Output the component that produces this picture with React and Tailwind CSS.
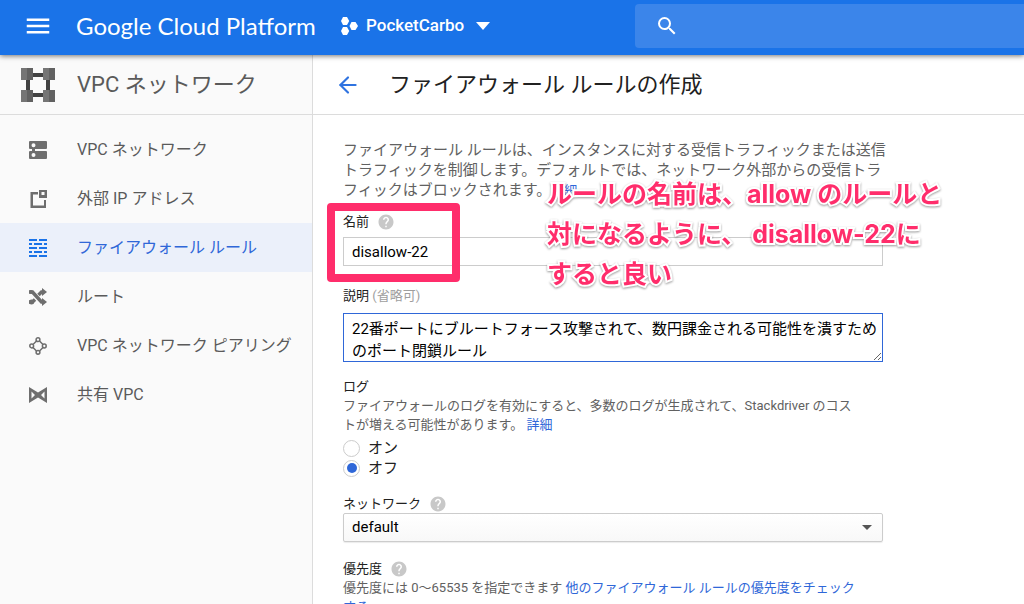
import React, { useState } from 'react';
import { ArrowLeft } from 'lucide-react';
import { MdHelp, MdSearch, MdMenu } from 'react-icons/md';

const NetworkIcon = () => (
  <svg viewBox="0 0 18 18" className="size-[18px]" fill="currentColor">
    <path fillRule="evenodd" d="M1 0h16a1 1 0 0 1 1 1v6a1 1 0 0 1-1 1H6v2h11a1 1 0 0 1 1 1v6a1 1 0 0 1-1 1H1a1 1 0 0 1-1-1v-6a1 1 0 0 1 1-1h2V8H1a1 1 0 0 1-1-1V1a1 1 0 0 1 1-1zM4.500 2.200a2 2 0 1 0 0 4 2 2 0 0 0 0-4zM4.500 12a2 2 0 1 0 0 4 2 2 0 0 0 0-4z" />
  </svg>
);

const AddressIcon = () => (
  <svg viewBox="0 0 18 18" className="size-[18px]" fill="currentColor">
    <path d="M1.500 2H9v2.500H4v11h11V10h2v8H1.500z" />
    <path fillRule="evenodd" d="M10 0h8v8h-8zM12.500 2v3h3V2z" />
  </svg>
);

const FirewallIcon = () => (
  <svg viewBox="0 0 18 18" className="size-[18px]" fill="currentColor">
    <path d="M0 0h8v2H0zM10 0h8v2h-8zM0 4h3v2H0zM5 4h8v2H5zM15 4h3v2h-3zM0 8h8v2H0zM10 8h8v2h-8zM0 12h3v2H0zM5 12h8v2H5zM15 12h3v2h-3zM0 16h8v2H0zM10 16h8v2h-8z" />
  </svg>
);

const RouteIcon = () => (
  <svg viewBox="0 0 18 18" className="size-[18px]" fill="none" stroke="currentColor" strokeWidth="3.500">
    <path d="M0 4h3.500l9 10H14M0 14h3.500l2.500-2.500M9.500 7l3-3H14" />
    <path d="M13 0l5 4-5 4zM13 10l5 4-5 4z" fill="currentColor" stroke="none" />
    <circle cx="2" cy="4" r="2" fill="currentColor" stroke="none" />
    <circle cx="2.500" cy="14" r="2.500" fill="currentColor" stroke="none" />
  </svg>
);

const PeeringIcon = () => (
  <svg viewBox="0 0 18 18" className="size-[18px]" fill="none" stroke="currentColor" strokeWidth="1.500">
    <path d="M7.500 4L4 7.500M10.500 4L14 7.500M4 10.500L7.500 14M14 10.500L10.500 14" />
    <circle cx="9" cy="2.700" r="1.900" />
    <circle cx="2.700" cy="9" r="1.900" />
    <circle cx="15.300" cy="9" r="1.900" />
    <circle cx="9" cy="15.300" r="1.900" />
  </svg>
);

const SharedIcon = () => (
  <svg viewBox="0 0 18 18" className="size-[18px]" fill="currentColor">
    <path fillRule="evenodd" d="M0 1l9 5.500L18 1v16l-9-5.500L0 17zM2.500 5.500v7L6 9zM15.500 5.500v7L12 9z" />
  </svg>
);

const VpcLogo = () => (
  <svg viewBox="0 0 34 34" className="size-[34px]">
    <path fill="#424242" d="M12 5h10v4H12zM12 25h10v4H12zM5 12h4v10H5zM25 12h4v10h-4z" />
    <path fill="#757575" d="M0 0h12v12H0zM22 0h12v12H22zM0 22h12v12H0zM22 22h12v12H22z" />
    <path fill="#616161" d="M6 0h6v12H6zM28 0h6v12h-6zM6 22h6v12H6zM28 22h6v12h-6z" />
  </svg>
);

const ProjectIcon = () => (
  <svg viewBox="0 0 17 18" className="h-[18px] w-[17px]" fill="currentColor">
    <path d="M2 0h4l2.200 4L6 8H2L0 4zM2 10h4l2.200 4L6 18H2L0 14zM10.500 5h4L17 9l-2.500 4h-4L8.500 9z" />
  </svg>
);

const navItems = [
  { label: 'VPC ネットワーク', icon: NetworkIcon },
  { label: '外部 IP アドレス', icon: AddressIcon },
  { label: 'ファイアウォール ルール', icon: FirewallIcon, active: true },
  { label: 'ルート', icon: RouteIcon },
  { label: 'VPC ネットワーク ピアリング', icon: PeeringIcon },
  { label: '共有 VPC', icon: SharedIcon },
];

const HelpButton = () => (
  <button type="button" aria-label="ヘルプ" className="text-[#c8c8c8]">
    <MdHelp className="size-[18px]" />
  </button>
);

const radioClass =
  'grid size-[17px] appearance-none place-items-center rounded-full border border-[#ccc] bg-white before:size-[10px] before:rounded-full before:content-[""] checked:before:bg-[#2f67d8]';

const App = () => {
  const [name, setName] = useState('disallow-22');
  const [description, setDescription] = useState(
    '22番ポートにブルートフォース攻撃されて、数円課金される可能性を潰すためのポート閉鎖ルール'
  );
  const [logging, setLogging] = useState('off');

  return (
    <div className="flex h-screen flex-col overflow-hidden bg-white font-[Roboto,'Noto_Sans_CJK_JP',sans-serif] text-[#212121]">

      {/* Top bar */}
      <header className="relative flex h-[55px] shrink-0 items-center bg-[#1a73e8] pb-[3px] text-white shadow-[0_1px_5px_rgba(0,0,0,0.55)]">
        <button type="button" aria-label="メニュー" className="ml-[23px]">
          <MdMenu className="size-[30px]" />
        </button>
        <a href="#home" className="ml-[23px] w-[241px] whitespace-nowrap font-[Lato,sans-serif] text-2xl">
          Google Cloud Platform
        </a>
        <button type="button" className="ml-6 flex items-center gap-2 text-[17px] font-medium">
          <ProjectIcon />
          PocketCarbo
          <svg viewBox="0 0 14 8" className="ml-1 h-2 w-3.5" fill="currentColor">
            <path d="M0 0h14L7 8z" />
          </svg>
        </button>
        <label className="ml-auto flex h-11 w-[38%] items-center rounded-l-sm bg-[#3b85ea] pl-5">
          <MdSearch className="size-6 shrink-0" />
          <input type="text" aria-label="検索" className="min-w-0 flex-1 bg-transparent pl-3 outline-none" />
        </label>
      </header>

      <div className="flex min-h-0 flex-1">

        {/* Sidebar */}
        <aside className="w-[313px] shrink-0 border-r border-[#dcdcdc] bg-[#fafafa] text-[#5a5a5a]">
          <div className="flex h-[60px] items-center gap-[22px] border-b border-[#dcdcdc] pl-[21px]">
            <VpcLogo />
            <h2 className="text-[22px]">VPC ネットワーク</h2>
          </div>
          <nav className="pt-2.5">
            {navItems.map(({ label, icon: Icon, active }) => (
              <a
                key={label}
                href="#nav"
                className={`flex h-[49px] items-center gap-[30px] pl-[29px] text-base ${active ? 'bg-[#ebf0fa] text-[#2f67d8]' : ''}`}
              >
                <span className={active ? 'text-[#1a73e8]' : 'text-[#6e6e6e]'}><Icon /></span>
                {label}
              </a>
            ))}
          </nav>
        </aside>

        {/* Firewall rule form */}
        <main className="min-w-0 flex-1 overflow-hidden">
          <div className="flex h-[60px] items-center gap-7 border-b border-[#dcdcdc] pl-[22px]">
            <a href="#back" aria-label="戻る" className="text-[#2f73e0]"><ArrowLeft size={26} /></a>
            <h1 className="text-[22px]">ファイアウォール ルールの作成</h1>
          </div>

          <form className="pt-[25px] pl-[30px] text-[13px] leading-[19px]" onSubmit={(e) => e.preventDefault()}>
            <p className="max-w-[548px] text-[15px] leading-5 text-[#616161]">
              ファイアウォール ルールは、インスタンスに対する受信トラフィックまたは送信トラフィックを制御します。デフォルトでは、ネットワーク外部からの受信トラフィックはブロックされます。
              <a href="#more" className="text-[13px] text-[#2f67d8]">詳細</a>
            </p>

            <div className="relative max-w-[540px] pt-[11px]">
              <div className="flex items-center gap-2">
                <label htmlFor="name">名前</label>
                <HelpButton />
              </div>
              <input
                id="name"
                type="text"
                value={name}
                onChange={(e) => setName(e.target.value)}
                className="mt-1.5 block h-[29px] w-full border border-[#ccc] px-2 text-[15px] text-black outline-none"
              />
              {/* Callout on the name field */}
              <div className="pointer-events-none absolute top-0.5 -left-4 h-[79px] w-[133px] rounded-sm border-8 border-[#ff2d6b]" />
              <p className="pointer-events-none absolute -top-[27px] left-[204px] w-[410px] font-[Inter,'Noto_Sans_CJK_JP',sans-serif] text-[25px] leading-10 font-bold text-[#ff2d6b] [paint-order:stroke_fill] [-webkit-text-stroke:4px_white] drop-shadow-[0_1px_1px_rgba(0,0,0,0.4)]">
                ルールの名前は、allow のルールと<br />対になるように、 disallow-22に<br />すると良い
              </p>
            </div>

            <div className="max-w-[540px] pt-5">
              <label htmlFor="description" className="block">
                説明 <span className="text-[#9e9e9e]">(省略可)</span>
              </label>
              <textarea
                id="description"
                value={description}
                onChange={(e) => setDescription(e.target.value)}
                className="mt-2 block h-[49px] w-full resize overflow-hidden border border-[#2f67d8] pt-1 pl-2 text-[15px] leading-[22px] text-black outline-none"
              />
            </div>

            <fieldset className="pt-[15px]">
              <legend className="contents">ログ</legend>
              <p className="max-w-[518px] text-[#616161]">
                ファイアウォールのログを有効にすると、多数のログが生成されて、Stackdriver のコストが増える可能性があります。 <a href="#logs" className="text-[#2f67d8]">詳細</a>
              </p>
              <div className="pt-1 text-[15px] leading-5">
                <label className="flex items-center gap-2">
                  <input type="radio" name="log" checked={logging === 'on'} onChange={() => setLogging('on')} className={radioClass} />
                  オン
                </label>
                <label className="flex items-center gap-2">
                  <input type="radio" name="log" checked={logging === 'off'} onChange={() => setLogging('off')} className={radioClass} />
                  オフ
                </label>
              </div>
            </fieldset>

            <div className="max-w-[540px] pt-4">
              <div className="flex items-center gap-2">
                <label htmlFor="network">ネットワーク</label>
                <HelpButton />
              </div>
              <div className="relative">
                <select
                  id="network"
                  className="block h-[29px] w-full appearance-none rounded-xs border border-[#ccc] bg-linear-to-b from-white to-[#f8f8f8] px-2 text-[15px] text-black shadow-[0_1px_1px_rgba(0,0,0,0.08)]"
                >
                  <option>default</option>
                </select>
                <svg viewBox="0 0 10 5" className="pointer-events-none absolute top-3 right-[11px] h-[5px] w-2.5" fill="#555">
                  <path d="M0 0h10L5 5z" />
                </svg>
              </div>
            </div>

            <div className="max-w-[518px] pt-[17px]">
              <div className="flex items-center gap-2">
                <label htmlFor="priority">優先度</label>
                <HelpButton />
              </div>
              <p className="text-[#616161]">
                優先度には 0〜65535 を指定できます <a href="#priority" className="text-[#2f67d8]">他のファイアウォール ルールの優先度をチェックする</a>
              </p>
            </div>
            <input id="priority" type="text" defaultValue="1000" className="mt-1 block h-[29px] w-full max-w-[540px] border border-[#ccc] px-2" />
          </form>
        </main>
      </div>
    </div>
  );
};

export default App;
